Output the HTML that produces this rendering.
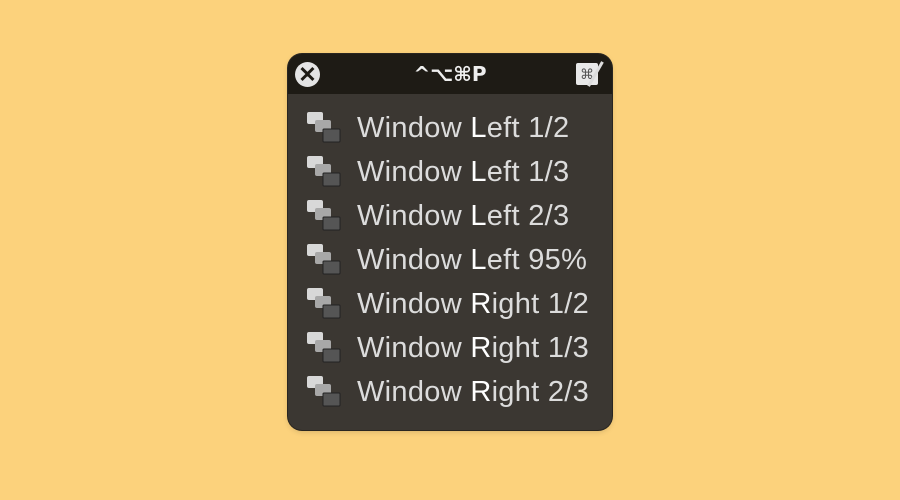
<!DOCTYPE html>
<html><head><style>
body{margin:0;width:900px;height:500px;background:#fcd27c;font-family:"Liberation Sans",sans-serif;position:relative;overflow:hidden}
.p{position:absolute;left:288px;top:54px;width:324px;height:376px;border-radius:14px;background:#3b3732;overflow:hidden;box-shadow:0 0 0 1px #2a2620,0 2px 6px rgba(0,0,0,.15)}
.h{height:40px;background:#1e1b15;position:relative}
.x{position:absolute;left:7px;top:8px;width:25px;height:25px;border-radius:50%;background:#e4e4e4;color:#1e1b15;font-size:22px;font-weight:bold;line-height:25px;text-align:center}
.t{position:absolute;left:0;right:0;top:8px;text-align:center;color:#eee;font-size:20px;font-weight:bold;font-family:"DejaVu Sans",sans-serif}
.k{position:absolute;left:288px;top:9px;width:22px;height:22px;background:#e8e8e8;border-radius:2px;color:#555;font-size:14px;text-align:center;line-height:22px}
.w{position:absolute;left:306px;top:6px;width:3px;height:28px;background:#ddd;transform:rotate(30deg)}
.r{position:absolute;left:357px;color:#dcdcdc;font-size:29px;letter-spacing:.3px;height:44px;line-height:44px}
.r b{font-weight:normal;color:#fff}
.i{position:absolute;left:306px;width:36px;height:34px}
</style></head><body>
<div class="p"><div class="h"><div class="x">✕</div><div class="t">^⌥⌘P</div><div class="k">⌘</div><div class="w"></div></div></div>
<svg width="0" height="0" style="position:absolute"><defs><g id="ic">
<rect x="1" y="1" width="16" height="12" rx="2" fill="#d8d8d8"/>
<rect x="9" y="9" width="16" height="12" rx="2" fill="#a8a8a8"/>
<rect x="17" y="18" width="17" height="13" rx="1" fill="#555" stroke="#222"/>
</g></defs></svg>
<svg class="i" style="top:111px"><use href="#ic"/></svg><div class="r" style="top:106px">Window <b>L</b>eft 1/2</div>
<svg class="i" style="top:155px"><use href="#ic"/></svg><div class="r" style="top:150px">Window <b>L</b>eft 1/3</div>
<svg class="i" style="top:199px"><use href="#ic"/></svg><div class="r" style="top:194px">Window <b>L</b>eft 2/3</div>
<svg class="i" style="top:243px"><use href="#ic"/></svg><div class="r" style="top:238px">Window <b>L</b>eft 95%</div>
<svg class="i" style="top:287px"><use href="#ic"/></svg><div class="r" style="top:282px">Window <b>R</b>ight 1/2</div>
<svg class="i" style="top:331px"><use href="#ic"/></svg><div class="r" style="top:326px">Window <b>R</b>ight 1/3</div>
<svg class="i" style="top:375px"><use href="#ic"/></svg><div class="r" style="top:370px">Window <b>R</b>ight 2/3</div>
</body></html>
